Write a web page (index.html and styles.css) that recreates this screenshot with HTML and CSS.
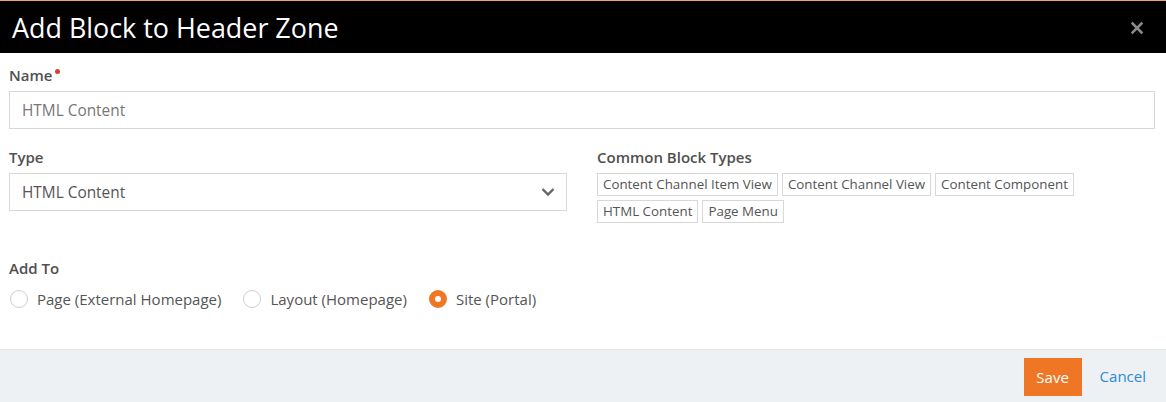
FILE: index.html
```html
<!DOCTYPE html>
<html>
<head>
<meta charset="utf-8">
<link rel="stylesheet" href="styles.css">
</head>
<body>
<div class="modal">
  <div class="modal-header">
    <h1 class="title">Add Block to Header Zone</h1>
    <span class="close"><svg width="12" height="12" viewBox="0 0 12 12"><path d="M1.5 1.5 L10.5 10.5 M10.5 1.5 L1.5 10.5" stroke="#8a8a8a" stroke-width="2.6" stroke-linecap="square"/></svg></span>
  </div>
  <div class="modal-body">
    <div class="field">
      <label class="label">Name<span class="req"></span></label>
      <div class="input">HTML Content</div>
    </div>
    <div class="cols">
      <div class="field">
        <label class="label">Type</label>
        <div class="input select">HTML Content
          <svg class="chev" width="14" height="10" viewBox="0 0 14 10"><path d="M1.5 2 L7 7.5 L12.5 2" fill="none" stroke="#666" stroke-width="2.4"/></svg>
        </div>
      </div>
      <div class="field">
        <label class="label">Common Block Types</label>
        <div class="tags">
          <span class="tag">Content Channel Item View</span>
          <span class="tag">Content Channel View</span>
          <span class="tag">Content Component</span>
          <span class="tag">HTML Content</span>
          <span class="tag">Page Menu</span>
        </div>
      </div>
    </div>
    <div class="field addto">
      <label class="label">Add To</label>
      <div class="radios">
        <span class="radio"><span class="dot"></span>Page (External Homepage)</span>
        <span class="radio"><span class="dot"></span>Layout (Homepage)</span>
        <span class="radio"><span class="dot on"></span>Site (Portal)</span>
      </div>
    </div>
  </div>
  <div class="modal-footer">
    <button class="btn-save">Save</button>
    <a class="btn-cancel">Cancel</a>
  </div>
</div>
</body>
</html>
```
FILE: styles.css
```css
html, body {
  margin: 0;
  padding: 0;
  background: #fff;
}
body {
  font-family: "Open Sans", "Segoe UI", sans-serif;
  color: #4a4a4a;
  width: 1166px;
  height: 402px;
  overflow: hidden;
}
.modal {
  display: flex;
  flex-direction: column;
  height: 402px;
}
.modal-header {
  background: #000;
  border-top: 1px solid #f0a26e;
  display: flex;
  align-items: center;
  justify-content: space-between;
  padding: 0 23px 0 12px;
  box-sizing: border-box;
  height: 53px;
}
.title {
  margin: 0;
  color: #fff;
  font-weight: 400;
  font-size: 26.9px;
  line-height: 1;
  padding-top: 2px;
}
.close {
  display: flex;
  padding-top: 1px;
}
.modal-body {
  flex: 1;
  padding: 12px 11px 0 9px;
}
.label {
  display: block;
  font-size: 15px;
  font-weight: 600;
  color: #505050;
  line-height: 20px;
  margin-bottom: 6px;
}
.req {
  display: inline-block;
  width: 5px;
  height: 5px;
  border-radius: 50%;
  background: #e23b2d;
  vertical-align: top;
  margin: 4px 0 0 3px;
}
.input {
  border: 1px solid #d8d8d8;
  height: 38px;
  box-sizing: border-box;
  padding: 0 12px;
  display: flex;
  align-items: center;
  font-size: 15.4px;
  color: #777;
}
.select {
  justify-content: space-between;
  color: #555;
  padding-right: 11px;
}
.cols {
  display: grid;
  grid-template-columns: 558px 1fr;
  column-gap: 30px;
  margin-top: 18px;
}
.tags {
  display: flex;
  flex-wrap: wrap;
  gap: 4px 4px;
  margin-top: 5px;
}
.tag {
  display: block;
  border: 1px solid #d8d8d8;
  font-size: 13.35px;
  line-height: 21px;
  height: 23px;
  box-sizing: border-box;
  padding: 0 5px;
  color: #555;
  white-space: nowrap;
}
.addto {
  margin-top: 35px;
}
.addto .label {
  margin-bottom: 11px;
}
.radios {
  display: flex;
  gap: 22px;
  margin-left: 1px;
}
.radio {
  display: flex;
  align-items: center;
  font-size: 15px;
  color: #555;
}
.dot {
  width: 18px;
  height: 18px;
  box-sizing: border-box;
  border-radius: 50%;
  border: 1.5px solid #cfcfcf;
  margin-right: 9px;
  background: #fff;
}
.dot.on {
  border: 6px solid #ee7624;
}
.modal-footer {
  height: 53px;
  border-top: 1px solid #e2e4e6;
  background: #eef1f4;
  box-sizing: border-box;
  display: flex;
  align-items: center;
  justify-content: flex-end;
  padding: 0 20px 0 0;
  gap: 18px;
}
.btn-save {
  background: #ee7624;
  color: #fff;
  border: none;
  font-family: inherit;
  font-size: 15px;
  width: 58px;
  height: 38px;
  padding: 0;
  margin-top: 1px;
}
.btn-cancel {
  color: #2b8bd6;
  font-size: 15px;
}
```
